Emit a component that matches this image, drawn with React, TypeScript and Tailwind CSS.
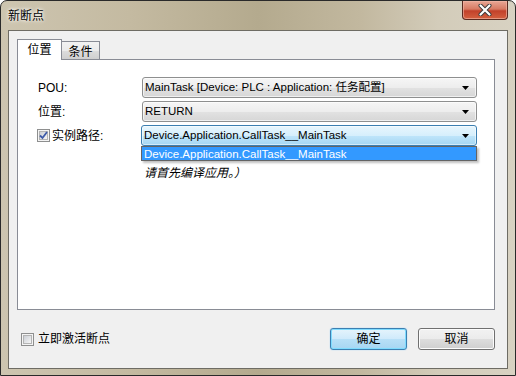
import React from 'react';

const font = "font-['Liberation_Sans','Noto_Sans_CJK_SC',sans-serif]";

const Arrow = () => (
  <svg width="7" height="4" viewBox="0 0 7 4" className="shrink-0">
    <path d="M0 0H7L3.5 4Z" fill="#000" />
  </svg>
);

interface ComboProps {
  text: string;
  focused?: boolean;
}

const Combo: React.FC<ComboProps> = ({ text, focused }) => (
  <div
    className={
      focused
        ? 'flex h-[21px] flex-1 items-center rounded-[3px] border border-[#3c7fb1] bg-[linear-gradient(#e8f6fd_0%,#d6effc_50%,#bfe5fa_51%,#a5d7f3_100%)] pl-[2px] pr-[7px] shadow-[inset_0_0_0_1px_#ffffff80]'
        : 'flex h-[21px] flex-1 items-center rounded-[3px] border border-[#8e8f8f] bg-[linear-gradient(#f6f6f6_0%,#ededed_50%,#e2e2e2_51%,#d6d6d6_100%)] pl-[2px] pr-[7px] shadow-[inset_0_0_0_1px_#ffffffa0]'
    }
  >
    <span className="flex-1 truncate text-[11.5px] leading-[15px] text-black">{text}</span>
    <Arrow />
  </div>
);

const CheckBox: React.FC<{ checked?: boolean }> = ({ checked }) => (
  <div className="flex h-[13px] w-[13px] shrink-0 items-center justify-center border border-[#8e8f8f] bg-[#f4f4f4]">
    <div className="relative h-[9px] w-[9px] border border-[#b4b4b4] bg-[linear-gradient(135deg,#cbcfd5,#f6f6f6)]">
      {checked && (
        <svg width="11" height="11" viewBox="0 0 11 11" className="absolute left-[-2px] top-[-2px]">
          <path d="M2 5.5L4.5 8L9 2" fill="none" stroke="#3d5aa8" strokeWidth="1.8" />
        </svg>
      )}
    </div>
  </div>
);

export default function App() {
  return (
    <div
      className={`${font} flex h-[376px] w-[516px] flex-col rounded-t-[7px] border border-[#2a2a2a] bg-[linear-gradient(90deg,#cdc5b0_0%,#c4baa1_25%,#b4aa8e_50%,#c2b89f_70%,#d3ccba_85%,#d8d2c2_100%)] px-[7px] pb-[6px]`}
    >
      {/* title bar */}
      <div className="flex h-[29px] shrink-0 items-start justify-between">
        <span className="mt-[8px] text-[12px] leading-[14px] text-black [text-shadow:0_0_5px_#ffffff,0_0_3px_#ffffff]">
          新断点
        </span>
        <div className="flex h-[19px] w-[46px] items-center justify-center rounded-b-[4px] border border-t-0 border-[#5a2a20] bg-[linear-gradient(#e9a795_0%,#d77a63_45%,#c2412a_55%,#d4603f_100%)] shadow-[inset_0_0_0_1px_#f0b8a8a0]">
          <svg width="14" height="12" viewBox="0 0 14 12">
            <path d="M2.5 1.5L11.5 10.5M11.5 1.5L2.5 10.5" stroke="#3b3b3b" strokeWidth="4" strokeLinecap="round" />
            <path d="M2.5 1.5L11.5 10.5M11.5 1.5L2.5 10.5" stroke="#ffffff" strokeWidth="2.2" strokeLinecap="round" />
          </svg>
        </div>
      </div>

      {/* client area */}
      <div className="flex flex-1 flex-col border border-[#6e6c64] bg-[#f0f0f0] pl-[8px] pr-[12px] pt-[8px]">
        {/* tabs */}
        <div className="flex h-[20px] items-end">
          <div className="relative z-10 -mb-[1px] flex h-[21px] w-[45px] items-center justify-center border border-b-0 border-[#898c95] bg-white pb-[1px] text-[12px] text-black">
            位置
          </div>
          <div className="flex h-[18px] w-[39px] -ml-px items-center justify-center border border-b-0 border-[#898c95] bg-[linear-gradient(#f2f2f2_0%,#ebebeb_50%,#dddddd_51%,#cfcfcf_100%)] pt-[2px] text-[12px] text-black">
            条件
          </div>
        </div>

        {/* tab panel */}
        <div className="flex h-[251px] flex-col border border-[#898c95] bg-white pl-[20px] pr-[17px] pt-[17px]">
          <div className="flex flex-col gap-[3px]">
            <div className="flex items-center">
              <span className="w-[104px] text-[12px] text-black">POU:</span>
              <Combo text="MainTask [Device: PLC : Application: 任务配置]" />
            </div>
            <div className="flex items-center">
              <span className="w-[104px] text-[12px] text-black">位置:</span>
              <Combo text="RETURN" />
            </div>
            <div className="flex items-center">
              <div className="flex w-[104px] items-center gap-[2px] -ml-px">
                <CheckBox checked />
                <span className="text-[12px] text-black">实例路径:</span>
              </div>
              <div className="relative flex flex-1">
                <Combo text="Device.Application.CallTask__MainTask" focused />
                <div className="absolute left-0 right-0 top-full z-20 flex h-[15px] items-center border border-[#646464] bg-[#3399ff] pl-[2px] text-[11.5px] leading-[14px] text-white shadow-[2px_2px_2px_#00000040]">
                  Device.Application.CallTask__MainTask
                </div>
              </div>
            </div>
          </div>
          <div className="ml-[104px] mt-[21px] pl-[2px] text-[12px] italic leading-[13px] text-black">
            请首先编译应用。）
          </div>
        </div>

        {/* bottom row */}
        <div className="flex items-center justify-between pl-[4px] pt-[18px]">
          <div className="flex items-center gap-[4px]">
            <CheckBox />
            <span className="text-[12px] text-black">立即激活断点</span>
          </div>
          <div className="flex gap-[11px]">
            <button className="flex h-[22px] w-[77px] items-center justify-center rounded-[3px] border border-[#3c7fb1] bg-[linear-gradient(#e5f4fc_0%,#cfeafb_50%,#b8e0f7_51%,#a7d6f2_100%)] text-[12px] text-black shadow-[inset_0_0_0_1px_#7fdcff,0_0_1px_#55bbff]">
              确定
            </button>
            <button className="flex h-[22px] w-[77px] items-center justify-center rounded-[3px] border border-[#707070] bg-[linear-gradient(#f2f2f2_0%,#ebebeb_50%,#dddddd_51%,#cfcfcf_100%)] text-[12px] text-black shadow-[inset_0_0_0_1px_#fcfcfc]">
              取消
            </button>
          </div>
        </div>
      </div>
    </div>
  );
}
